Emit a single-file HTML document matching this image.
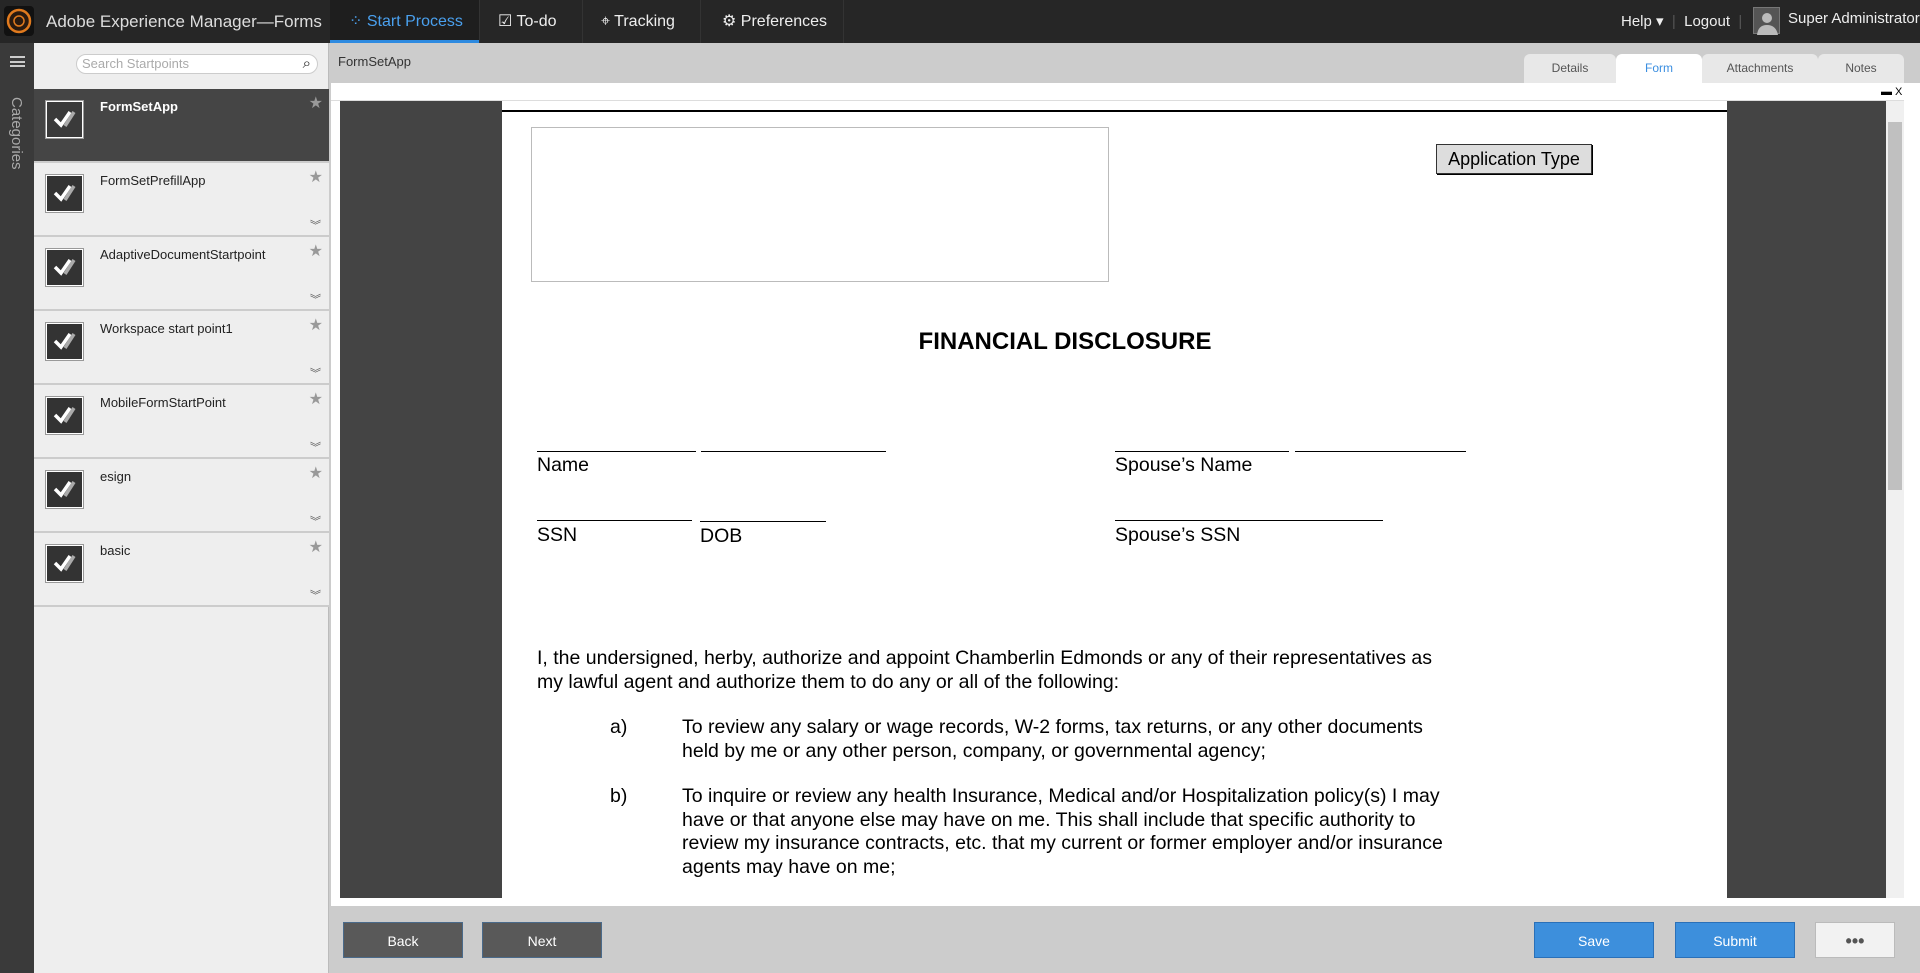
<!DOCTYPE html>
<html><head><meta charset="utf-8"><style>
*{margin:0;padding:0;box-sizing:border-box}
body{width:1920px;height:973px;overflow:hidden;background:#ccc;font-family:"Liberation Sans",sans-serif;position:relative}
.a{position:absolute}
.top{left:0;top:0;width:1920px;height:43px;background:#262626;color:#ddd}
.nav{top:0;height:43px;line-height:43px;font-size:16px;color:#eee}
.rail{left:0;top:43px;width:34px;height:930px;background:#3a3a3a}
.side{left:34px;top:43px;width:295px;height:930px;background:#eee;border-right:1px solid #bbb}
.item{left:0;width:295px;height:74px;border-bottom:2px solid #ccc;background:#eee}
.item .ic{position:absolute;left:12px;top:12px;width:37px;height:37px;background:#333;border:1px solid #fff;outline:1px solid #999}
.item .t{position:absolute;left:66px;top:10px;font-size:13px;color:#222}
.item .st{position:absolute;right:6px;top:4px;color:#999;font-size:16px}
.item .ch{position:absolute;right:8px;bottom:2px;color:#555;font-size:11px}
.ul{position:absolute;height:1px;background:#000}
.f{position:absolute;font-size:19.5px;color:#000;white-space:nowrap}
.btn{position:absolute;top:922px;height:36px;width:120px;color:#fff;font-size:14px;text-align:center;line-height:36px;border:1px solid #4a6a8a}
.tab{position:absolute;top:54px;height:29px;background:#e8e8e8;border-radius:6px 6px 0 0;font-size:12px;color:#555;text-align:center;line-height:29px}
</style></head><body>
<div class="a top"></div>
<div class="a" style="left:4px;top:6px;width:30px;height:30px;background:#111;border-radius:4px"><svg width="30" height="30"><circle cx="15" cy="15" r="11" fill="#2a1a10" stroke="#e07a1e" stroke-width="2.5"/><circle cx="15" cy="15" r="5" fill="none" stroke="#e07a1e" stroke-width="1.5"/></svg></div>
<div class="a nav" style="left:46px;font-size:17px;color:#ddd">Adobe Experience Manager—Forms</div>
<div class="a" style="left:330px;top:0;width:149px;height:43px;background:#1e1e1e;border-bottom:3px solid #2d8ae0"></div>
<div class="a nav" style="left:349px;color:#4aa0ee">⁘ Start Process</div>
<div class="a" style="left:479px;top:0;width:104px;height:43px;border-left:1px solid #333;border-right:1px solid #333"></div>
<div class="a nav" style="left:498px">☑ To-do</div>
<div class="a nav" style="left:601px">⌖ Tracking</div>
<div class="a" style="left:700px;top:0;width:144px;height:43px;border-left:1px solid #333;border-right:1px solid #333"></div>
<div class="a nav" style="left:722px">⚙ Preferences</div>
<div class="a nav" style="left:1621px;font-size:15px">Help ▾ <span style="color:#555">&nbsp;|&nbsp;</span> Logout <span style="color:#555">&nbsp;|</span></div>
<div class="a" style="left:1753px;top:7px;width:27px;height:27px;background:#555;border:1px solid #777"><svg width="27" height="27"><circle cx="13" cy="10" r="5" fill="#bbb"/><path d="M3 27 Q4 17 13 17 Q22 17 24 27Z" fill="#bbb"/></svg></div>
<div class="a nav" style="left:1788px;font-size:15px;top:-3px">Super Administrator</div>

<div class="a rail"></div>
<div class="a" style="left:10px;top:56px;width:15px;height:11px;border-top:2px solid #ccc;border-bottom:2px solid #ccc"><div style="margin-top:2.5px;height:2px;background:#ccc"></div></div>
<div class="a" style="left:8px;top:97px;color:#aaa;font-size:15px;writing-mode:vertical-rl">Categories</div>
<div class="a side">
 <div class="a" style="left:42px;top:11px;width:242px;height:20px;background:#fff;border:1px solid #ccc;border-radius:10px;font-size:13px;color:#aaa;padding-left:5px;line-height:18px">Search Startpoints<span style="position:absolute;right:6px;top:0;color:#222;font-size:15px">⌕</span></div>
 <div class="a item" style="top:46px;background:#454545"><div class="ic" style="background:#3a3a3a"></div><div class="t" style="color:#fff;font-weight:bold">FormSetApp</div><div class="st">★</div></div>
 <div class="a item" style="top:120px"><div class="ic"></div><div class="t">FormSetPrefillApp</div><div class="st">★</div><div class="ch">︾</div></div>
 <div class="a item" style="top:194px"><div class="ic"></div><div class="t">AdaptiveDocumentStartpoint</div><div class="st">★</div><div class="ch">︾</div></div>
 <div class="a item" style="top:268px"><div class="ic"></div><div class="t">Workspace start point1</div><div class="st">★</div><div class="ch">︾</div></div>
 <div class="a item" style="top:342px"><div class="ic"></div><div class="t">MobileFormStartPoint</div><div class="st">★</div><div class="ch">︾</div></div>
 <div class="a item" style="top:416px"><div class="ic"></div><div class="t">esign</div><div class="st">★</div><div class="ch">︾</div></div>
 <div class="a item" style="top:490px"><div class="ic"></div><div class="t">basic</div><div class="st">★</div><div class="ch">︾</div></div>
</div>
<svg class="a" style="left:46px;top:89px" width="40" height="530">
<g id="ck" fill="none" stroke-width="3.5"><path d="M9 30 L15 36 L24 23" stroke="#fff"/><path d="M19 37 L28 23" stroke="#aaa"/></g>
<use href="#ck" y="74"/><use href="#ck" y="148"/><use href="#ck" y="222"/><use href="#ck" y="296"/><use href="#ck" y="370"/><use href="#ck" y="444"/>
</svg>

<div class="a" style="left:338px;top:54px;font-size:13px;color:#333">FormSetApp</div>
<div class="tab" style="left:1524px;width:92px">Details</div>
<div class="tab" style="left:1616px;width:86px;background:#fff;color:#3a8ee0">Form</div>
<div class="tab" style="left:1702px;width:116px">Attachments</div>
<div class="tab" style="left:1818px;width:86px">Notes</div>
<div class="a" style="left:331px;top:83px;width:1589px;height:823px;background:#fff"></div>
<div class="a" style="left:1881px;top:86px;font-size:11px">▬ X</div>
<div class="a" style="left:331px;top:100px;width:1573px;height:1px;background:#ddd"></div>
<div class="a" style="left:340px;top:101px;width:162px;height:797px;background:#444"></div>
<div class="a" style="left:1727px;top:101px;width:159px;height:797px;background:#444"></div>
<div class="a" style="left:1886px;top:101px;width:18px;height:797px;background:#f0f0f0"></div>
<div class="a" style="left:1888px;top:122px;width:14px;height:368px;background:#c0c0c0"></div>
<div class="a" style="left:502px;top:110px;width:1225px;height:2px;background:#000"></div>
<div class="a" style="left:531px;top:127px;width:578px;height:155px;border:1px solid #bbb"></div>
<div class="a" style="left:1436px;top:144px;width:156px;height:30px;background:#ddd;border:1px solid #333;box-shadow:1px 1px 0 #000;font-size:18px;text-align:center;line-height:28px">Application Type</div>
<div class="f" style="left:0;width:2130px;text-align:center;top:328px;font-size:24px;font-weight:bold">FINANCIAL DISCLOSURE</div>
<div class="ul" style="left:537px;top:451px;width:159px"></div><div class="ul" style="left:701px;top:451px;width:185px"></div>
<div class="ul" style="left:1115px;top:451px;width:174px"></div><div class="ul" style="left:1295px;top:451px;width:171px"></div>
<div class="f" style="left:537px;top:454px">Name</div><div class="f" style="left:1115px;top:454px">Spouse’s Name</div>
<div class="ul" style="left:537px;top:520px;width:155px"></div><div class="ul" style="left:700px;top:521px;width:126px"></div>
<div class="ul" style="left:1115px;top:520px;width:268px"></div>
<div class="f" style="left:537px;top:524px">SSN</div><div class="f" style="left:700px;top:525px">DOB</div><div class="f" style="left:1115px;top:524px">Spouse’s SSN</div>
<div class="f" style="left:537px;top:647px;line-height:23.5px;white-space:normal;width:925px">I, the undersigned, herby, authorize and appoint Chamberlin Edmonds or any of their representatives as my lawful agent and authorize them to do any or all of the following:</div>
<div class="f" style="left:610px;top:716px">a)</div>
<div class="f" style="left:682px;top:716px;line-height:23.5px;white-space:normal;width:782px">To review any salary or wage records, W-2 forms, tax returns, or any other documents held by me or any other person, company, or governmental agency;</div>
<div class="f" style="left:610px;top:785px">b)</div>
<div class="f" style="left:682px;top:785px;line-height:23.5px;white-space:normal;width:782px">To inquire or review any health Insurance, Medical and/or Hospitalization policy(s) I may have or that anyone else may have on me. This shall include that specific authority to review my insurance contracts, etc. that my current or former employer and/or insurance agents may have on me;</div>

<div class="btn" style="left:343px;background:#595959">Back</div>
<div class="btn" style="left:482px;background:#595959">Next</div>
<div class="btn" style="left:1534px;background:#3d8fdc;border-color:#2a70b8">Save</div>
<div class="btn" style="left:1675px;background:#3d8fdc;border-color:#2a70b8">Submit</div>
<div class="btn" style="left:1815px;width:80px;background:#f2f2f2;border-color:#bbb;color:#555;font-size:18px;font-weight:bold">•••</div>
</body></html>
